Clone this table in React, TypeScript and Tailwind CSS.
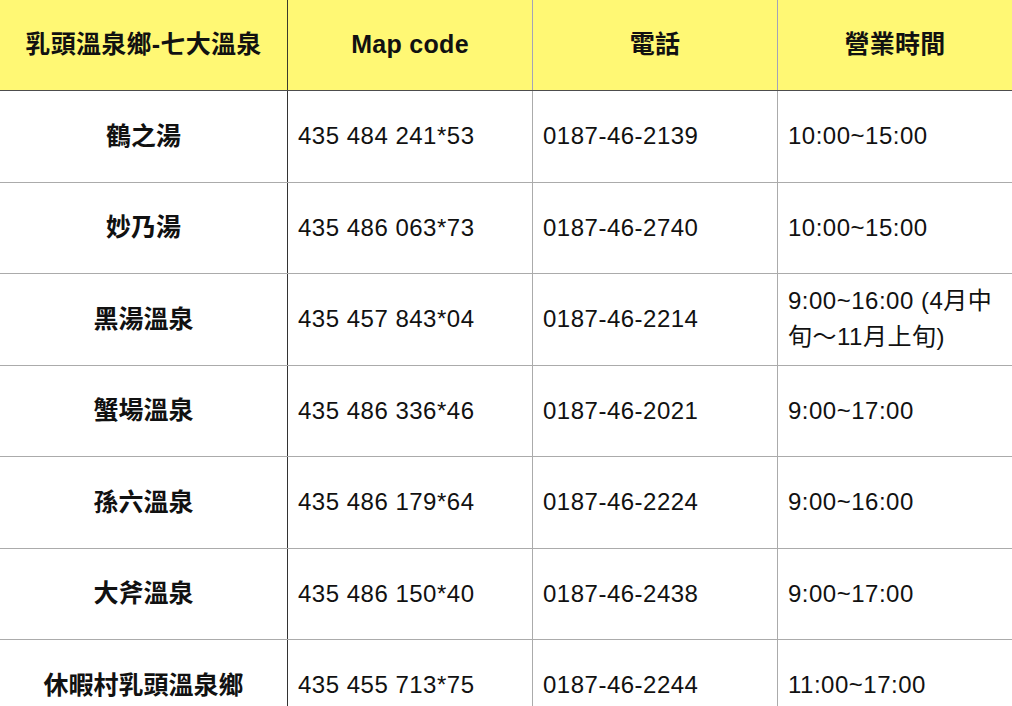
import React from 'react';

interface Spa {
  name: string;
  mapCode: string;
  phone: string;
  hours: string[];
}

const spas: Spa[] = [
  { name: '鶴之湯', mapCode: '435 484 241*53', phone: '0187-46-2139', hours: ['10:00~15:00'] },
  { name: '妙乃湯', mapCode: '435 486 063*73', phone: '0187-46-2740', hours: ['10:00~15:00'] },
  { name: '黑湯溫泉', mapCode: '435 457 843*04', phone: '0187-46-2214', hours: ['9:00~16:00 (4月中', '旬～11月上旬)'] },
  { name: '蟹場溫泉', mapCode: '435 486 336*46', phone: '0187-46-2021', hours: ['9:00~17:00'] },
  { name: '孫六溫泉', mapCode: '435 486 179*64', phone: '0187-46-2224', hours: ['9:00~16:00'] },
  { name: '大斧溫泉', mapCode: '435 486 150*40', phone: '0187-46-2438', hours: ['9:00~17:00'] },
  { name: '休暇村乳頭溫泉鄉', mapCode: '435 455 713*75', phone: '0187-46-2244', hours: ['11:00~17:00'] },
];

const font = "font-['Liberation_Sans','Noto_Sans_CJK_TC',sans-serif]";
const cols = 'grid grid-cols-[288px_245px_245px_1fr]';

const App: React.FC = () => {
  return (
    <div className={`w-[1012px] h-[706px] overflow-hidden bg-white text-[#111] text-[24px] ${font}`}>
      <div className={`${cols} h-[91px] bg-[#fff874] border-b border-[#4d4d4d] font-bold text-[25px] tracking-[0.3px]`}>
        <div className="flex items-center justify-center border-r border-[#3a3a2a]">乳頭溫泉鄉-七大溫泉</div>
        <div className="flex items-center justify-center border-r border-[#a3a3b8]">Map code</div>
        <div className="flex items-center justify-center border-r border-[#a3a3b8]">電話</div>
        <div className="flex items-center justify-center">營業時間</div>
      </div>

      {spas.map((spa) => (
        <div key={spa.name} className={`${cols} h-[91.5px] border-b border-[#ababab]`}>
          <div className="flex items-center justify-center border-r border-[#333] font-bold text-[25px]">{spa.name}</div>
          <div className="flex items-center pl-[10px] border-r border-[#ababab] tracking-[0.5px]">{spa.mapCode}</div>
          <div className="flex items-center pl-[10px] border-r border-[#ababab] tracking-[0.5px]">{spa.phone}</div>
          <div className="flex flex-col justify-center pl-[10px] leading-[36px] tracking-[0.5px]">
            {spa.hours.map((line) => (
              <span key={line} className="whitespace-nowrap">{line}</span>
            ))}
          </div>
        </div>
      ))}
    </div>
  );
};

export default App;
